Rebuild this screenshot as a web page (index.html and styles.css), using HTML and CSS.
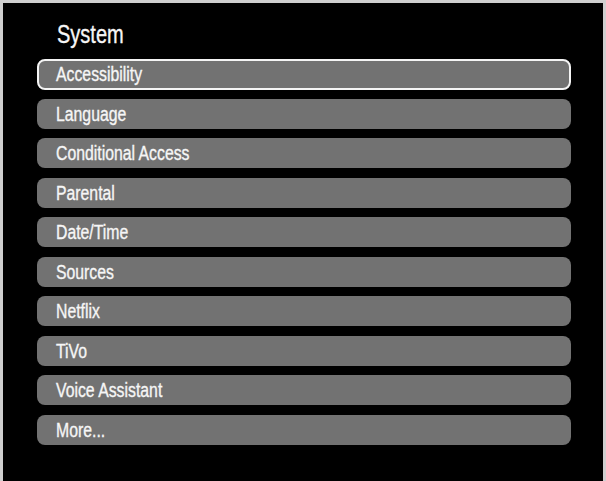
FILE: index.html
```html
<!DOCTYPE html>
<html>
<head>
<meta charset="utf-8">
<link rel="stylesheet" href="styles.css">
</head>
<body>
<div class="screen">
  <div class="title"><span class="txt">System</span></div>
  <ul class="menu">
    <li class="item selected"><span class="txt">Accessibility</span></li>
    <li class="item"><span class="txt">Language</span></li>
    <li class="item"><span class="txt">Conditional Access</span></li>
    <li class="item"><span class="txt">Parental</span></li>
    <li class="item"><span class="txt">Date/Time</span></li>
    <li class="item"><span class="txt">Sources</span></li>
    <li class="item"><span class="txt">Netflix</span></li>
    <li class="item"><span class="txt">TiVo</span></li>
    <li class="item"><span class="txt">Voice Assistant</span></li>
    <li class="item"><span class="txt">More...</span></li>
  </ul>
</div>
</body>
</html>
```
FILE: styles.css
```css
html, body {
  margin: 0;
  padding: 0;
  background: #000;
}
.screen {
  box-sizing: border-box;
  width: 606px;
  height: 481px;
  background: #000;
  border-top: 3px solid #cfcfcf;
  border-left: 3px solid #cfcfcf;
  border-right: 3px solid #cfcfcf;
  padding: 16px 32px 0 34px;
  font-family: "Liberation Sans", Arial, sans-serif;
  color: #f6f6f6;
}
.txt {
  display: inline-block;
  transform-origin: 0 50%;
  white-space: nowrap;
  -webkit-text-stroke: 0.35px #f6f6f6;
}
.title {
  font-size: 26px;
  line-height: 30px;
  padding-left: 20px;
  margin-bottom: 10px;
}
.title .txt {
  transform: scaleX(0.77);
}
.menu {
  list-style: none;
  margin: 0;
  padding: 0;
  display: flex;
  flex-direction: column;
  gap: 9.5px;
}
.item {
  box-sizing: border-box;
  height: 30px;
  line-height: 30px;
  font-size: 20px;
  padding-left: 19px;
  background: #727272;
  border-radius: 8px;
}
.item .txt {
  transform: scaleX(0.79);
}
.item.selected {
  height: 31px;
  line-height: 27px;
  padding-left: 17px;
  border: 2px solid #f4f4f4;
  margin-bottom: -1px;
}
```
